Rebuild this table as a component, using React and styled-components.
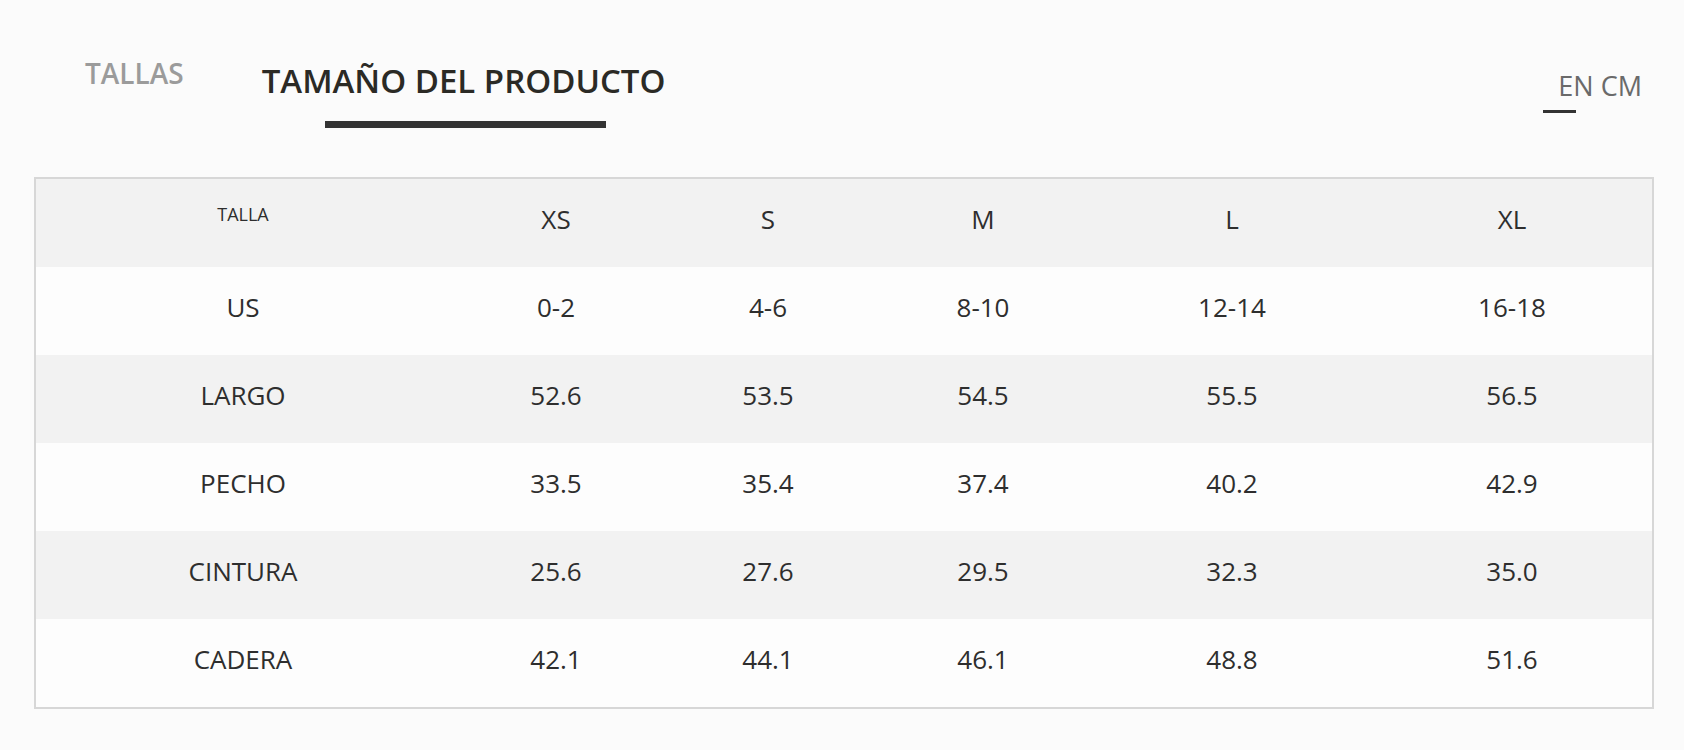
import React from "react";
import styled, { createGlobalStyle } from "styled-components";

const Global = createGlobalStyle`
  html, body {
    margin: 0;
    padding: 0;
    background: #fbfbfb;
  }
  body {
    font-family: "Open Sans", "Liberation Sans", sans-serif;
    color: #2e2e2e;
  }
`;

const Page = styled.div`
  width: 1684px;
  padding: 0 30px 0 34px;
  box-sizing: border-box;
`;

const Header = styled.div`
  display: flex;
  justify-content: space-between;
  align-items: flex-start;
  height: 177px;
`;

const Tabs = styled.div`
  display: flex;
  align-items: flex-start;
`;

const Tab = styled.div`
  display: flex;
  flex-direction: column;
  align-items: center;
  font-weight: 600;
  font-size: ${(p) => (p.$active ? 33 : 28)}px;
  line-height: ${(p) => (p.$active ? 33 : 28)}px;
  color: ${(p) => (p.$active ? "#2b2a25" : "#9b9b9b")};
  margin-top: ${(p) => (p.$active ? 64 : 59)}px;
  margin-left: ${(p) => p.$offset}px;
  white-space: nowrap;
`;

const TabBar = styled.div`
  width: 281px;
  height: 7px;
  margin-top: 24px;
  margin-left: 4px;
  background: #333333;
`;

const Unit = styled.div`
  position: relative;
  margin-top: 72px;
  margin-right: 12px;
  font-size: 27px;
  line-height: 27px;
  color: #6a6a6a;
  white-space: nowrap;

  &::after {
    content: "";
    position: absolute;
    left: -15px;
    top: 38px;
    width: 33px;
    height: 3px;
    background: #333333;
  }
`;

const Table = styled.table`
  border-collapse: separate;
  border-spacing: 0;
  table-layout: fixed;
  width: 1620px;
  border: 2px solid #d7d7d7;
`;

const Row = styled.tr`
  background: ${(p) => (p.$shaded ? "#f2f2f2" : "#fdfdfd")};
`;

const Cell = styled.td`
  height: 88px;
  padding: 0;
  text-align: center;
  vertical-align: middle;
  font-size: ${(p) => (p.$small ? 18 : 26)}px;
  line-height: 30px;
  color: #2e2e2e;
  padding-bottom: ${(p) => (p.$small ? 18 : 8)}px;
  box-sizing: border-box;
  white-space: nowrap;
`;

const widths = [414, 212, 212, 218, 280, 280];

const header = ["XS", "S", "M", "L", "XL"];
const rows = [
  ["US", "0-2", "4-6", "8-10", "12-14", "16-18"],
  ["LARGO", "52.6", "53.5", "54.5", "55.5", "56.5"],
  ["PECHO", "33.5", "35.4", "37.4", "40.2", "42.9"],
  ["CINTURA", "25.6", "27.6", "29.5", "32.3", "35.0"],
  ["CADERA", "42.1", "44.1", "46.1", "48.8", "51.6"],
];

export default function App() {
  return (
    <>
      <Global />
      <Page>
        <Header>
          <Tabs>
            <Tab $offset={51}>TALLAS</Tab>
            <Tab $active $offset={78}>
              TAMAÑO DEL PRODUCTO
              <TabBar />
            </Tab>
          </Tabs>
          <Unit>EN CM</Unit>
        </Header>
        <Table>
          <colgroup>
            {widths.map((w, i) => (
              <col key={i} style={{ width: w }} />
            ))}
          </colgroup>
          <tbody>
            <Row $shaded>
              <Cell $small>TALLA</Cell>
              {header.map((h) => (
                <Cell key={h}>{h}</Cell>
              ))}
            </Row>
            {rows.map((r, i) => (
              <Row key={r[0]} $shaded={i % 2 === 1}>
                {r.map((c, j) => (
                  <Cell key={j}>{c}</Cell>
                ))}
              </Row>
            ))}
          </tbody>
        </Table>
      </Page>
    </>
  );
}
